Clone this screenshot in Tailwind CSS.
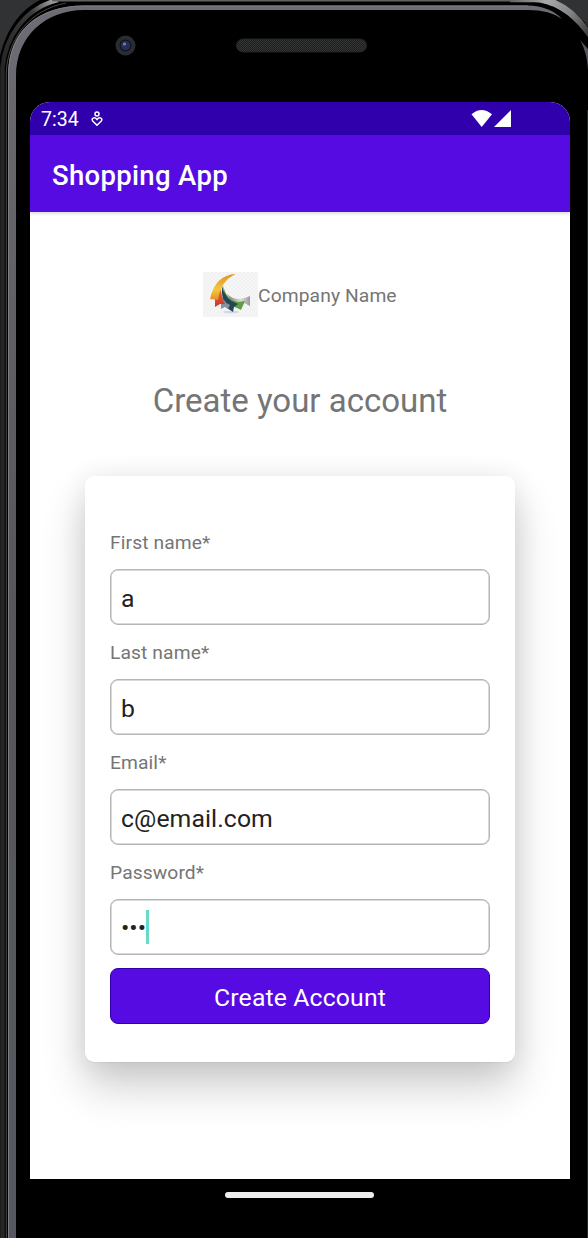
<!DOCTYPE html>
<html lang="en">
<head>
<meta charset="utf-8">
<title>Shopping App</title>
<script src="https://cdn.jsdelivr.net/npm/@tailwindcss/browser@4"></script>
</head>
<body class="bg-black font-['Roboto',sans-serif]">
<div class="relative w-[588px] h-[1238px] overflow-hidden bg-black">
  <!-- Phone bezel -->
  <svg class="absolute inset-0" width="588" height="1238" viewBox="0 0 588 1238" fill="none">
    <defs>
      <linearGradient id="side" x1="0" y1="0" x2="0" y2="1238" gradientUnits="userSpaceOnUse">
        <stop offset="0" stop-color="#6e6d76"/><stop offset=".12" stop-color="#66666c"/><stop offset=".5" stop-color="#55575b"/><stop offset="1" stop-color="#55595f"/>
      </linearGradient>
      <linearGradient id="rim" x1="0" y1="60" x2="70" y2="0" gradientUnits="userSpaceOnUse">
        <stop offset="0" stop-color="#262626"/><stop offset=".6" stop-color="#3a3a3a"/><stop offset=".85" stop-color="#a0a0a0"/><stop offset="1" stop-color="#606262"/>
      </linearGradient>
      <linearGradient id="corner" x1="510" y1="0" x2="588" y2="45" gradientUnits="userSpaceOnUse">
        <stop offset="0" stop-color="#606262"/><stop offset=".35" stop-color="#a8a8a8"/><stop offset=".65" stop-color="#858585"/><stop offset="1" stop-color="#303030"/>
      </linearGradient>
      <pattern id="mesh" width="2" height="2" patternUnits="userSpaceOnUse"><rect width="2" height="2" fill="#1c1d1d"/><path d="M0 0h1v1H0zM1 1h1v1H1z" fill="#343636"/></pattern>
    </defs>
    <rect width="588" height="1238" fill="#303234"/>
    <path d="M0 1238V56C6 30 20 10 40 0H548C566 6 580 14 588 27V1238Z" fill="#000"/>
    <path d="M2.500 1238V68C5 38 24 8 58 0" stroke="url(#rim)" stroke-width="4.500"/>
    <path d="M6.300 1238V72C8 38 30 10 66 3" stroke="#484848" stroke-width="1"/>
    <path d="M52 .5H520" stroke="#606262" stroke-width="2"/>
    <path d="M510 -1H540C562 3 578 17 590 37" stroke="url(#corner)" stroke-width="7"/>
    <path d="M508 3.500H535C560 6 576 21 590 42" stroke="#000" stroke-width="2"/>
    <path d="M8 1238V76C8 30 38 6 84 5.500H528Q550 6 562 19Q550 10 528 10H84C46 10 16 36 16 76V1238Z" fill="url(#side)"/>
    <path d="M8.500 1238V76C8.500 31 38 6 84 6H528" stroke="#7e7e82"/>
    <path d="M580 40Q587 52 588 70V49Z" fill="#55555c"/>
    <path d="M587.500 110V1238" stroke="#25292a"/>
    <circle cx="125.500" cy="45.500" r="10" fill="#2b2c2d"/>
    <circle cx="125.500" cy="45.500" r="6" fill="#11131c"/>
    <circle cx="125.500" cy="45.500" r="4.800" fill="#252e57"/>
    <circle cx="124.500" cy="44" r="1.600" fill="#7882a5"/>
    <rect x="236.500" y="39" width="130" height="13" rx="6.500" fill="url(#mesh)" stroke="#242525"/>
  </svg>

  <!-- Screen -->
  <main class="relative ml-[30px] mt-[102px] w-[540px] h-[1077px] rounded-t-[20px] overflow-hidden bg-white flex flex-col">
    <div class="h-[33px] shrink-0 bg-[#3000ad] text-white flex items-center pl-[11px] pr-[59px]">
      <span class="text-[19.500px] leading-none pt-[3px]">7:34</span>
      <svg class="ml-[12px]" width="12" height="16" viewBox="0 0 12 16" fill="none" stroke="#fff" stroke-width="1.500"><circle cx="6" cy="3" r="2"/><path d="M6 14.200L1.700 10C-.2 7.500 3.200 5.200 6 8.500C8.800 5.200 12.200 7.500 10.300 10Z"/></svg>
      <svg class="ml-auto" width="40" height="18" viewBox="0 0 40 18" fill="#fff"><path d="M.5 4.300Q10.500-4.300 21 4.300L10.700 17Z"/><path d="M23 17L40 0V17Z"/></svg>
    </div>
    <header class="h-[77px] shrink-0 bg-[#560be3] shadow-[0_1px_4px_rgba(0,0,0,0.2)] flex items-center pl-[22px] pt-[5px]">
      <h1 class="text-[27.500px] leading-none tracking-[0.32px] font-medium text-white whitespace-nowrap">Shopping App</h1>
    </header>
    <div class="mt-[60px] ml-[173px] h-[45px] shrink-0 flex items-center">
      <svg width="55" height="45" viewBox="0 0 55 45">
        <defs>
          <pattern id="checks" width="4" height="4" patternUnits="userSpaceOnUse"><rect width="4" height="4" fill="#f6f6f6"/><path d="M0 0h2v2H0zM2 2h2v2H2z" fill="#f1f1f1"/></pattern>
          <linearGradient id="gold" x1="0" y1="0" x2="0" y2="1"><stop offset="0" stop-color="#df9226"/><stop offset=".6" stop-color="#f5c83b"/><stop offset="1" stop-color="#e88b28"/></linearGradient>
          <linearGradient id="red" x1="0" y1="0" x2="0" y2="1"><stop offset="0" stop-color="#e4a02b"/><stop offset=".6" stop-color="#dd5b2d"/><stop offset="1" stop-color="#cf3530"/></linearGradient>
          <linearGradient id="silver"><stop offset="0" stop-color="#777"/><stop offset=".6" stop-color="#ddd"/><stop offset="1" stop-color="#999"/></linearGradient>
        </defs>
        <rect width="55" height="45" fill="url(#checks)"/>
        <ellipse cx="28" cy="40" rx="8" ry="1.500" fill="#cfdbe8"/>
        <path d="M24 22Q33 31 47 24V34L41 31Q31 35 24 22Z" fill="url(#silver)"/>
        <path d="M20 13Q23 28 35 30L42 29L38 38L34 36Q21 32 20 13Z" fill="#5d9f43"/>
        <path d="M19 14Q22 28 35 32L31 35L30 40L24 36Q18 29 19 14Z" fill="#254853"/>
        <path d="M18 18Q18 29 27 33L25 37L22 35L18 37Z" fill="#8494a5"/>
        <path d="M31 3Q17 7 18 20Q19 27 22 32L17 32L12 35V27Q14 8 31 3Z" fill="url(#red)"/>
        <path d="M33 2Q18 8 15 28L7 27Q12 3 33 2Z" fill="url(#gold)"/>
      </svg>
      <span class="text-[19.250px] leading-none tracking-[0.1px] text-[#757575] whitespace-nowrap pt-[3px]">Company Name</span>
    </div>
    <h2 class="mt-[67px] h-[33px] text-[33px] leading-[33px] text-[#757575] text-center whitespace-nowrap">Create your account</h2>
    <form class="mt-[59px] ml-[55px] w-[430px] h-[586px] shrink-0 rounded-[9px] bg-white shadow-[0_24px_44px_rgba(0,0,0,0.2),0_2px_28px_rgba(0,0,0,0.08),0_1px_1px_rgba(0,0,0,0.05)] px-[25px] pt-[57px] flex flex-col text-[#757575] text-[19.250px] tracking-[0.1px] leading-[20px]">
      <label class="h-[110px] flex flex-col gap-[16px]">First name*<span class="h-[56px] rounded-[8px] border border-[#b5b5b5] shadow-[inset_0_0_0_0.5px_#b5b5b5] pl-[10px] pt-[3px] flex items-center text-[24.750px] text-[#222]">a</span></label>
      <label class="h-[110px] flex flex-col gap-[16px]">Last name*<span class="h-[56px] rounded-[8px] border border-[#b5b5b5] shadow-[inset_0_0_0_0.5px_#b5b5b5] pl-[10px] pt-[3px] flex items-center text-[24.750px] text-[#222]">b</span></label>
      <label class="h-[110px] flex flex-col gap-[16px]">Email*<span class="h-[56px] rounded-[8px] border border-[#b5b5b5] shadow-[inset_0_0_0_0.5px_#b5b5b5] pl-[10px] pt-[3px] flex items-center text-[24.750px] text-[#222]">c@email.com</span></label>
      <label class="h-[105px] flex flex-col gap-[16px]">Password*<span class="h-[56px] rounded-[8px] border border-[#b5b5b5] shadow-[inset_0_0_0_0.5px_#b5b5b5] pl-[10px] flex items-center text-[24.750px] tracking-normal text-[#222]"><span class="pt-[2px]">•••</span><i class="w-[3px] h-[34px] bg-[#68dbc8]"></i></span></label>
      <button type="button" class="h-[56px] shrink-0 rounded-[8px] border border-[#3000ad] bg-[#560be3] text-white text-[24.750px] tracking-[0.15px] leading-none pt-[4px]">Create Account</button>
    </form>
  </main>
  <div class="relative mt-[13px] ml-[225px] w-[149px] h-[6px] rounded-full bg-[#eee]"></div>
</div>
</body>
</html>
